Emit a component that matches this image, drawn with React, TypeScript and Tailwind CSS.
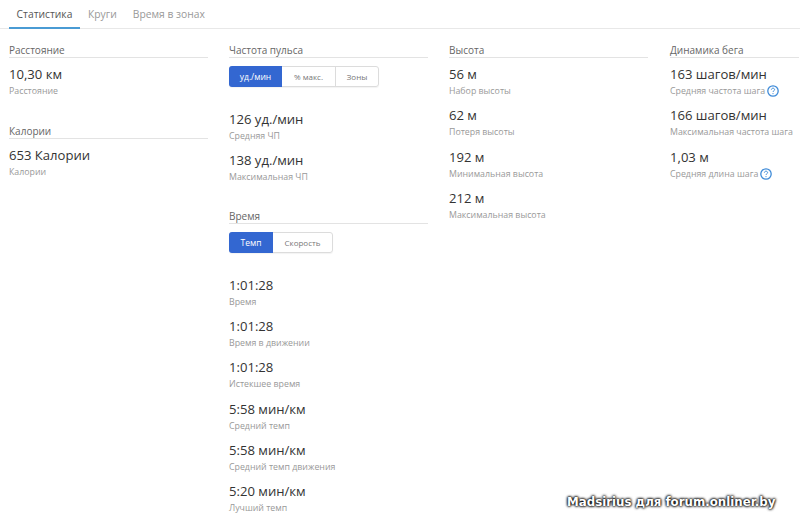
const font = { fontFamily: '"Open Sans", sans-serif' };

function HelpIcon() {
  return (
    <svg width="12" height="12" viewBox="0 0 12 12" fill="none" className="ml-[2px] shrink-0">
      <circle cx="6" cy="6" r="5.2" stroke="#3f8bd8" strokeWidth="1.3" />
      <path d="M4.4 4.7c0-.9.7-1.5 1.6-1.5s1.6.6 1.6 1.4c0 1.2-1.6 1.2-1.6 2.4" stroke="#3f8bd8" strokeWidth="1" />
      <circle cx="6" cy="8.6" r=".6" fill="#3f8bd8" />
    </svg>
  );
}

function Stat({ value, label, help }: { value: string; label: string; help?: boolean }) {
  return (
    <div className="h-[41.33px]">
      <div className="h-[20px] text-[13.1px] leading-[20px] text-[#333]">{value}</div>
      <div className="flex h-[14px] items-center text-[8.8px] leading-[14px] text-[#999]">
        {label}
        {help && <HelpIcon />}
      </div>
    </div>
  );
}

function Heading({ children }: { children: string }) {
  return (
    <div className="h-[15px] border-b border-[#e3e3e3] text-[10px] leading-[14px] text-[#666]">
      {children}
    </div>
  );
}

function Toggle({ items }: { items: [string, number][] }) {
  return (
    <div className="mt-[8px] flex h-[21px] w-fit rounded-[3px] border border-[#dcdcdc] text-[8px] leading-[19px] text-[#777] shadow-[0_1px_1px_rgba(0,0,0,0.05)]">
      {items.map(([name, width], i) => (
        <div
          key={name}
          style={{ width }}
          className={
            i === 0
              ? "-my-px -ml-px h-[21px] rounded-l-[3px] bg-[#3367d1] text-center text-[8.5px] leading-[21px] text-white"
              : i === 1
                ? "text-center"
                : "border-l border-[#dcdcdc] text-center"
          }
        >
          {name}
        </div>
      ))}
    </div>
  );
}

export default function App() {
  return (
    <div style={font} className="relative h-[525px] w-[800px] overflow-hidden bg-white">
      {/* Tabs */}
      <div className="flex h-[29px] border-b border-[#e8e8e8] pl-[9px] text-[10.3px] leading-[29px]">
        <div className="h-[29px] w-[71px] border-b-2 border-[#4a9bd4] text-center text-[#555]">Статистика</div>
        <div className="ml-[8px] text-[#999]">Круги</div>
        <div className="ml-[16px] text-[#999]">Время в зонах</div>
      </div>

      <div className="grid grid-cols-[199px_199px_199px_130px] gap-x-[21px] pl-[9px] pt-[14px]">
        <div>
          <Heading>Расстояние</Heading>
          <div className="mt-[6px]">
            <Stat value="10,30 км" label="Расстояние" />
          </div>
          <div className="mt-[19px]">
            <Heading>Калории</Heading>
            <div className="mt-[6px]">
              <Stat value="653 Калории" label="Калории" />
            </div>
          </div>
        </div>

        <div>
          <Heading>Частота пульса</Heading>
          <Toggle items={[["уд./мин", 53], ["% макс.", 53], ["Зоны", 43]]} />
          <div className="mt-[22px]">
            <Stat value="126 уд./мин" label="Средняя ЧП" />
            <Stat value="138 уд./мин" label="Максимальная ЧП" />
          </div>
          <div className="mt-[17px]">
            <Heading>Время</Heading>
            <Toggle items={[["Темп", 44], ["Скорость", 59]]} />
            <div className="mt-[22px]">
              <Stat value="1:01:28" label="Время" />
              <Stat value="1:01:28" label="Время в движении" />
              <Stat value="1:01:28" label="Истекшее время" />
              <Stat value="5:58 мин/км" label="Средний темп" />
              <Stat value="5:58 мин/км" label="Средний темп движения" />
              <Stat value="5:20 мин/км" label="Лучший темп" />
            </div>
          </div>
        </div>

        <div>
          <Heading>Высота</Heading>
          <div className="mt-[6px]">
            <Stat value="56 м" label="Набор высоты" />
            <Stat value="62 м" label="Потеря высоты" />
            <Stat value="192 м" label="Минимальная высота" />
            <Stat value="212 м" label="Максимальная высота" />
          </div>
        </div>

        <div className="ml-px">
          <Heading>Динамика бега</Heading>
          <div className="mt-[6px]">
            <Stat value="163 шагов/мин" label="Средняя частота шага" help />
            <Stat value="166 шагов/мин" label="Максимальная частота шага" />
            <Stat value="1,03 м" label="Средняя длина шага" help />
          </div>
        </div>
      </div>

      {/* Watermark */}
      <div
        className="absolute left-[567px] top-[495px] text-[11.8px] font-bold leading-[14px] whitespace-nowrap text-white [text-shadow:0_0_3px_#000,0_0_3px_#000,0_0_2px_#000]"
        style={{ fontFamily: '"DejaVu Sans", sans-serif' }}
      >
        Madsirius для forum.onliner.by
      </div>
    </div>
  );
}
